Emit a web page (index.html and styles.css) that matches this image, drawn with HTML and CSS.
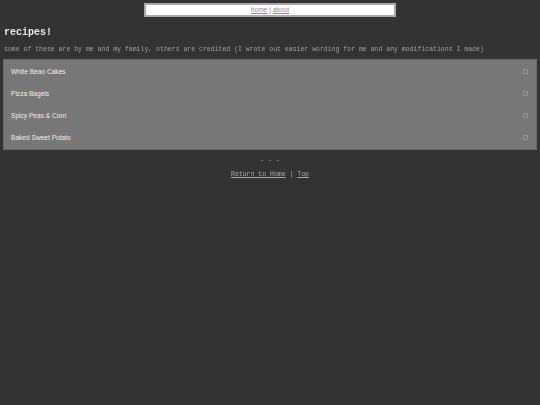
FILE: index.html
```html
<!DOCTYPE html>
<html>
<head>
<meta charset="utf-8">
<link rel="stylesheet" href="styles.css">
</head>
<body>
<nav class="topnav"><a href="#">home</a> | <a href="#">about</a></nav>
<h1 class="title">recipes!</h1>
<p class="intro">some of these are by me and my family, others are credited (I wrote out easier wording for me and any modifications I made)</p>
<div class="recipes">
  <div class="recipe"><span>White Bean Cakes</span><span class="marker"></span></div>
  <div class="recipe"><span>Pizza Bagels</span><span class="marker"></span></div>
  <div class="recipe"><span>Spicy Peas &amp; Corn</span><span class="marker"></span></div>
  <div class="recipe"><span>Baked Sweet Potato</span><span class="marker"></span></div>
</div>
<footer class="foot">
  <div class="sep">- - -</div>
  <div class="links"><a href="#">Return to Home</a> | <a href="#">Top</a></div>
</footer>
</body>
</html>
```
FILE: styles.css
```css
html, body {
  margin: 0;
  padding: 0;
  background: #333333;
}
body {
  padding: 3px 3px 0 3px;
  font-family: "Liberation Mono", monospace;
  color: #aaaaaa;
  -webkit-font-smoothing: antialiased;
}
.topnav {
  width: 248px;
  height: 10px;
  margin: 0 auto;
  background: #ffffff;
  border: 2px solid #a8a8a8;
  font-family: "Liberation Sans", sans-serif;
  font-size: 6.6px;
  line-height: 10px;
  text-align: center;
  color: #7a6a8a;
}
.topnav a {
  color: #9a80b4;
}
.title {
  margin: 10px 0 0 1px;
  font-family: "Liberation Mono", monospace;
  font-size: 10px;
  line-height: 12px;
  font-weight: bold;
  color: #e8e8e8;
  will-change: transform;
}
.intro {
  margin: 7px 0 0 1px;
  font-size: 6.5px;
  line-height: 8px;
  color: #a0a0a0;
  will-change: transform;
}
.recipes {
  margin-top: 5px;
  background: #777777;
  border: 1px solid #6a6a6a;
  display: flex;
  flex-direction: column;
}
.recipe {
  height: 22.25px;
  display: flex;
  align-items: center;
  justify-content: space-between;
  padding: 0 8px 0 7px;
  font-family: "Liberation Sans", sans-serif;
  font-size: 6.6px;
  color: #eeeeee;
}
.marker {
  width: 3px;
  height: 3px;
  border: 1px solid #939393;
  border-radius: 0.5px;
  background: #7c7c7c;
}
.foot {
  text-align: center;
  font-size: 6.5px;
  color: #aaaaaa;
  will-change: transform;
}
.sep {
  margin-top: 7px;
  line-height: 8px;
}
.links {
  margin-top: 6px;
  line-height: 8px;
}
.links a {
  color: #aaaaaa;
}
```
